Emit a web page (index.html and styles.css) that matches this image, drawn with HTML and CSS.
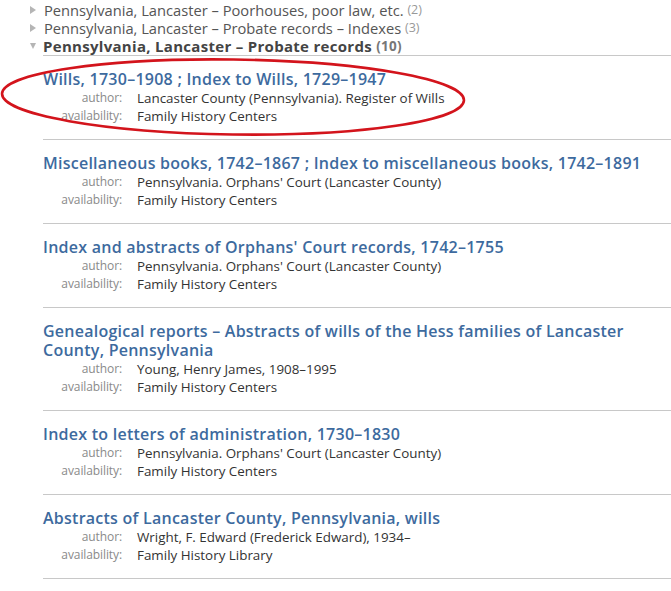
FILE: index.html
```html
<!DOCTYPE html>
<html lang="en">
<head>
<meta charset="utf-8">
<title>Probate records</title>
<link rel="stylesheet" href="styles.css">
</head>
<body>
<div class="page">
  <ul class="facets">
    <li class="facet closed"><span class="tri"></span>Pennsylvania, Lancaster – Poorhouses, poor law, etc. <span class="count">(2)</span></li>
    <li class="facet closed"><span class="tri"></span>Pennsylvania, Lancaster – Probate records – Indexes <span class="count">(3)</span></li>
    <li class="facet open"><span class="tri"></span>Pennsylvania, Lancaster – Probate records <span class="count">(10)</span></li>
  </ul>
  <div class="results">
    <div class="record">
      <div class="title">Wills, 1730–1908 ; Index to Wills, 1729–1947</div>
      <div class="meta"><span class="label">author:</span><span class="value">Lancaster County (Pennsylvania). Register of Wills</span>
      <span class="label">availability:</span><span class="value">Family History Centers</span></div>
    </div>
    <div class="record">
      <div class="title">Miscellaneous books, 1742–1867 ; Index to miscellaneous books, 1742–1891</div>
      <div class="meta"><span class="label">author:</span><span class="value">Pennsylvania. Orphans' Court (Lancaster County)</span>
      <span class="label">availability:</span><span class="value">Family History Centers</span></div>
    </div>
    <div class="record">
      <div class="title">Index and abstracts of Orphans' Court records, 1742–1755</div>
      <div class="meta"><span class="label">author:</span><span class="value">Pennsylvania. Orphans' Court (Lancaster County)</span>
      <span class="label">availability:</span><span class="value">Family History Centers</span></div>
    </div>
    <div class="record">
      <div class="title">Genealogical reports – Abstracts of wills of the Hess families of Lancaster County, Pennsylvania</div>
      <div class="meta"><span class="label">author:</span><span class="value">Young, Henry James, 1908–1995</span>
      <span class="label">availability:</span><span class="value">Family History Centers</span></div>
    </div>
    <div class="record">
      <div class="title">Index to letters of administration, 1730–1830</div>
      <div class="meta"><span class="label">author:</span><span class="value">Pennsylvania. Orphans' Court (Lancaster County)</span>
      <span class="label">availability:</span><span class="value">Family History Centers</span></div>
    </div>
    <div class="record">
      <div class="title">Abstracts of Lancaster County, Pennsylvania, wills</div>
      <div class="meta"><span class="label">author:</span><span class="value">Wright, F. Edward (Frederick Edward), 1934–</span>
      <span class="label">availability:</span><span class="value">Family History Library</span></div>
    </div>
  </div>
  <svg class="circle" width="671" height="150" viewBox="0 0 671 150">
    <ellipse cx="233" cy="97" rx="231" ry="37.5" transform="rotate(0.8 233 97)" fill="none" stroke="#d3141c" stroke-width="2.6"/>
  </svg>
</div>
</body>
</html>
```
FILE: styles.css
```css
html, body {
  margin: 0;
  padding: 0;
  background: #fff;
}
.page {
  position: relative;
  width: 671px;
  font-family: "Open Sans", "Noto Sans", sans-serif;
}
.facets {
  list-style: none;
  margin: 0;
  padding: 1px 0 0 0;
}
.facet {
  display: flex;
  align-items: center;
  height: 18px;
  line-height: 18px;
  font-size: 14.7px;
  color: #555;
  padding-left: 30px;
  white-space: pre;
}
.facet .count {
  font-size: 12.5px;
  color: #999;
}
.facet.open {
  font-size: 15px;
  font-weight: 700;
  color: #444;
  letter-spacing: 0.3px;
}
.facet.open .count {
  color: #777;
  font-size: 13.5px;
}
.tri {
  width: 0;
  height: 0;
  margin-right: 8px;
}
.closed .tri {
  border-left: 6px solid #b5b5b5;
  border-top: 4px solid transparent;
  border-bottom: 4px solid transparent;
}
.open .tri {
  border-top: 6px solid #b5b5b5;
  border-left: 3.5px solid transparent;
  border-right: 3.5px solid transparent;
  margin-right: 7px;
}
.results {
  margin-left: 43px;
  border-top: 1px solid #c8c8c8;
}
.record {
  padding: 14px 0 14px 0;
  border-bottom: 1px solid #c8c8c8;
}
.title {
  font-size: 16px;
  line-height: 19px;
  font-weight: 600;
  letter-spacing: 0.25px;
  color: #3d6a9e;
}
.meta {
  display: grid;
  grid-template-columns: 79px 1fr;
  column-gap: 15px;
  line-height: 18px;
}
.label {
  text-align: right;
  font-size: 12px;
  color: #8a8a8a;
  letter-spacing: -0.1px;
}
.value {
  font-size: 13.4px;
  color: #333;
}
.circle {
  position: absolute;
  left: 0;
  top: 0;
  pointer-events: none;
}
```
